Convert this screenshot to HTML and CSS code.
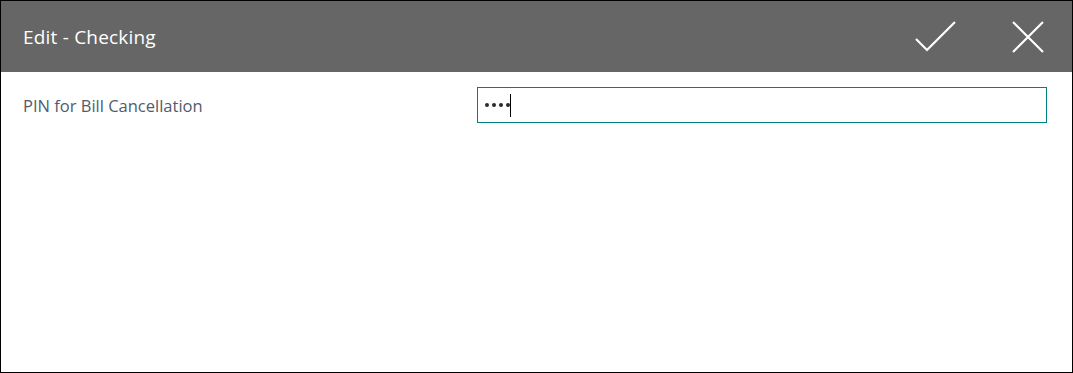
FILE: index.html
```html
<!DOCTYPE html>
<html lang="en">
<head>
<meta charset="UTF-8">
<title>Edit - Checking</title>
<link rel="stylesheet" href="styles.css">
</head>
<body>
<div class="dialog">
  <div class="header">
    <h1 class="title">Edit - Checking</h1>
    <div class="actions">
      <button class="icon-btn" title="OK">
        <svg width="42" height="32" viewBox="0 0 42 32"><path d="M1 18 L12 29 L40 1" fill="none" stroke="#fff" stroke-width="2.2"/></svg>
      </button>
      <button class="icon-btn" title="Close">
        <svg width="32" height="32" viewBox="0 0 32 32"><path d="M1 1 L31 31 M31 1 L1 31" fill="none" stroke="#fff" stroke-width="2.2"/></svg>
      </button>
    </div>
  </div>
  <div class="content">
    <div class="field">
      <label class="field-label">PIN for Bill Cancellation</label>
      <div class="pin-box">
        <span class="dot"></span><span class="dot"></span><span class="dot"></span><span class="dot"></span><span class="caret"></span>
      </div>
    </div>
  </div>
</div>
</body>
</html>
```

FILE: styles.css
```css
body {
  margin: 0;
  padding: 0;
  font-family: "Open Sans", "Noto Sans", sans-serif;
  background-color: white;
}

.dialog {
  box-sizing: border-box;
  width: 1073px;
  height: 373px;
  border: 1px solid #000;
  background-color: #fff;
}

.header {
  height: 71px;
  background-color: #666666;
  display: flex;
  align-items: center;
  justify-content: space-between;
  padding: 0 28px 0 22px;
}

.title {
  margin: 0;
  font-size: 19px;
  font-weight: 400;
  letter-spacing: 0.2px;
  color: #fff;
}

.actions {
  display: flex;
  align-items: center;
  gap: 55px;
}

.icon-btn {
  border: none;
  background: none;
  padding: 0;
  display: flex;
  cursor: pointer;
}

.content {
  padding: 15px 25px 0 22px;
}

.field {
  display: flex;
  align-items: center;
}

.field-label {
  width: 454px;
  font-size: 16.5px;
  color: #505c6d;
}

.pin-box {
  box-sizing: border-box;
  width: 570px;
  height: 36px;
  border: 1px solid #00807f;
  display: flex;
  align-items: center;
  gap: 3px;
  padding-left: 7px;
}

.dot {
  width: 4px;
  height: 4px;
  border-radius: 50%;
  background-color: #2a2a2a;
}

.caret {
  width: 1px;
  height: 23px;
  background-color: #000;
  margin-left: -3px;
}
```
